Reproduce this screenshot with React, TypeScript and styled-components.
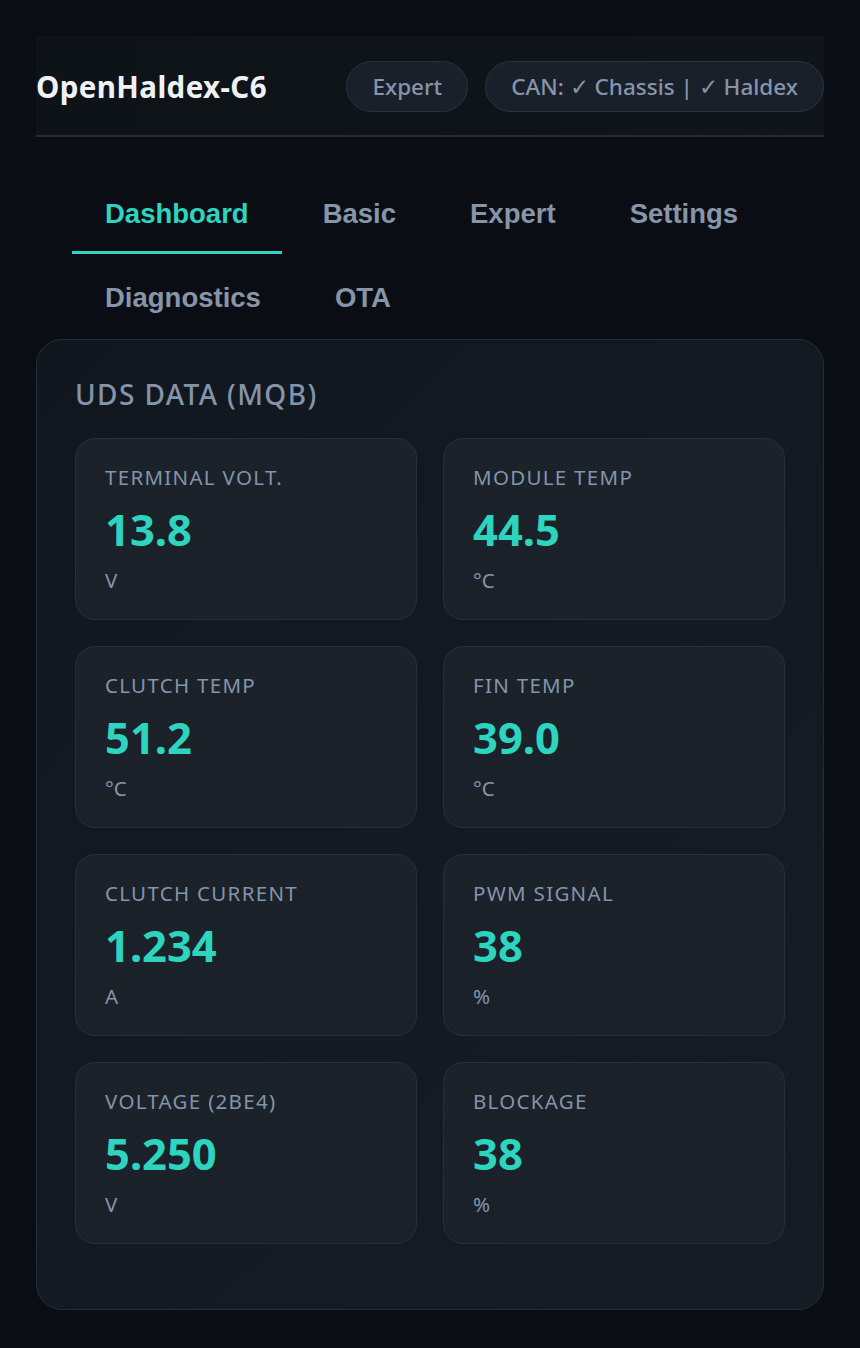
import React from "react";
import styled, { createGlobalStyle } from "styled-components";

const GlobalStyle = createGlobalStyle`
  html, body { margin: 0; padding: 0; background: #0a0e14; }
  body { font-family: "Noto Sans", "Open Sans", sans-serif; }
  * { box-sizing: border-box; }
`;

const Page = styled.div`
  min-height: 1348px;
  padding: 36px 36px 38px;
  background: #0a0e14;
`;

const Header = styled.header`
  display: flex;
  align-items: center;
  justify-content: space-between;
  height: 101px;
  padding: 2px 0 0;
  background: linear-gradient(90deg, #0e1318 0%, #10151b 100%);
  border-bottom: 2px solid #222c35;
`;

const Brand = styled.h1`
  margin: 0;
  font-family: "Noto Sans", sans-serif;
  font-size: 29.5px;
  font-weight: 700;
  color: #eef2f6;
  letter-spacing: 0.4px;
`;

const Pills = styled.div`
  display: flex;
  gap: 17px;
`;

const Pill = styled.span`
  display: inline-flex;
  align-items: center;
  height: 51px;
  padding: 0 25px;
  border-radius: 26px;
  background: #19202a;
  border: 1.5px solid #29333e;
  color: #8595ab;
  font-family: "Noto Sans", sans-serif;
  font-size: 22.5px;
  font-weight: 500;
  white-space: nowrap;
`;

const Tabs = styled.nav`
  display: flex;
  flex-wrap: wrap;
  column-gap: 8px;
  row-gap: 7px;
  margin-top: 40px;
  padding: 0 36px;
`;

const Tab = styled.button<{ $active?: boolean }>`
  appearance: none;
  background: none;
  border: none;
  border-bottom: 3px solid ${(p) => (p.$active ? "#2dd4bf" : "transparent")};
  padding: 21px 33px;
  font-family: "Liberation Sans", Arial, sans-serif;
  font-size: 27.5px;
  line-height: 32px;
  font-weight: 700;
  color: ${(p) => (p.$active ? "#2dd4bf" : "#8795a8")};
  cursor: pointer;
`;

const Panel = styled.section`
  margin-top: 1px;
  padding: 36px 38px 65px;
  border: 1.5px solid #242e38;
  border-radius: 26px;
  background: linear-gradient(135deg, #11171e 0%, #151c23 100%);
`;

const PanelTitle = styled.h2`
  margin: 0 0 25px;
  font-family: "Noto Sans", sans-serif;
  font-size: 28px;
  line-height: 37px;
  font-weight: 500;
  letter-spacing: 1.4px;
  color: #8394ab;
`;

const Grid = styled.div`
  display: grid;
  grid-template-columns: 1fr 1fr;
  gap: 26px;
`;

const Card = styled.div`
  height: 182px;
  padding: 23.5px 29px 0;
  border: 1.5px solid #262f39;
  border-radius: 20px;
  background: linear-gradient(180deg, #1b222a 0%, #1a2129 100%);
`;

const Label = styled.div`
  font-family: "Noto Sans", sans-serif;
  font-size: 20.5px;
  line-height: 28px;
  letter-spacing: 1.3px;
  color: #8394ab;
`;

const Value = styled.div`
  margin-top: 12px;
  font-family: "Noto Sans", sans-serif;
  font-size: 43.5px;
  line-height: 53px;
  font-weight: 700;
  color: #2dd4bf;
`;

const Unit = styled.div`
  margin-top: 10px;
  font-family: "Noto Sans", sans-serif;
  font-size: 20.5px;
  line-height: 28px;
  color: #8394ab;
`;

const metrics = [
  { label: "TERMINAL VOLT.", value: "13.8", unit: "V" },
  { label: "MODULE TEMP", value: "44.5", unit: "°C" },
  { label: "CLUTCH TEMP", value: "51.2", unit: "°C" },
  { label: "FIN TEMP", value: "39.0", unit: "°C" },
  { label: "CLUTCH CURRENT", value: "1.234", unit: "A" },
  { label: "PWM SIGNAL", value: "38", unit: "%" },
  { label: "VOLTAGE (2BE4)", value: "5.250", unit: "V" },
  { label: "BLOCKAGE", value: "38", unit: "%" },
];

const tabs = ["Dashboard", "Basic", "Expert", "Settings", "Diagnostics", "OTA"];

export default function App() {
  return (
    <>
      <GlobalStyle />
      <Page>
        <Header>
          <Brand>OpenHaldex-C6</Brand>
          <Pills>
            <Pill>Expert</Pill>
            <Pill>CAN: ✓ Chassis | ✓ Haldex</Pill>
          </Pills>
        </Header>
        <Tabs>
          {tabs.map((t, i) => (
            <Tab key={t} $active={i === 0}>
              {t}
            </Tab>
          ))}
        </Tabs>
        <Panel>
          <PanelTitle>UDS DATA (MQB)</PanelTitle>
          <Grid>
            {metrics.map((m) => (
              <Card key={m.label}>
                <Label>{m.label}</Label>
                <Value>{m.value}</Value>
                <Unit>{m.unit}</Unit>
              </Card>
            ))}
          </Grid>
        </Panel>
      </Page>
    </>
  );
}
